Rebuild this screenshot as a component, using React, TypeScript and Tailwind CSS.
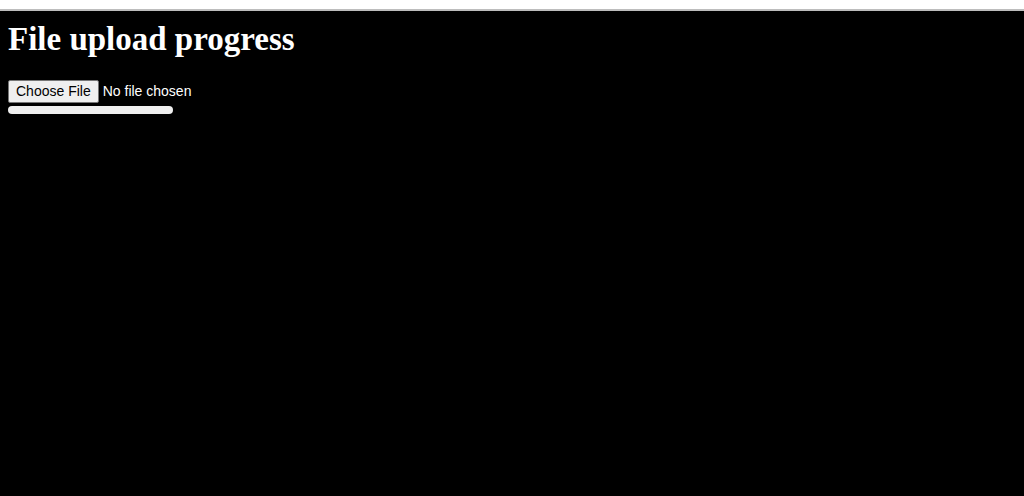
export default function App() {
  return (
    <div className="min-h-[496px] flex flex-col bg-black" style={{ fontFamily: '"Liberation Sans", Arial, sans-serif' }}>
      <div className="h-[11px] bg-white border-b-2 border-[#bdbdbd]" />

      <main className="flex-grow bg-black text-white px-[8px] pt-[9px]">
        <h1 className="text-[33px] leading-[38px] font-bold mb-[22px] font-['Liberation_Serif',serif]">
          File upload progress
        </h1>

        <input
          type="file"
          className="block text-[14px] leading-[22px] text-white file:bg-[#efefef] file:text-black file:border file:border-solid file:border-[#767676] file:rounded-[2px] file:px-[7px] file:py-[1px] file:mr-[4px] file:leading-[19px]"
        />
        <div className="mt-[3px] w-[165px] h-[8px] rounded-full bg-[#efefef]" />
      </main>
    </div>
  )
}
